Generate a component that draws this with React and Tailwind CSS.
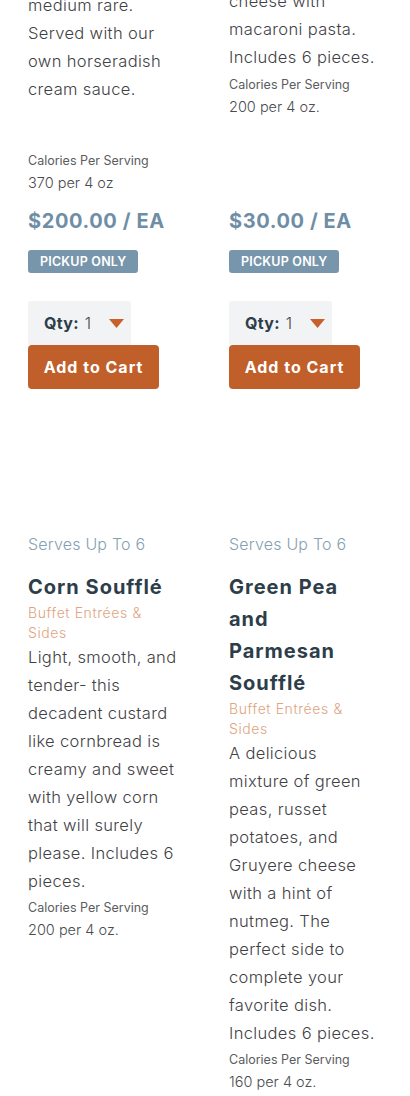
const font = { fontFamily: 'Inter, "Open Sans", sans-serif' };

const topRow = [
    {
        lines: ['medium rare.', 'Served with our', 'own horseradish', 'cream sauce.'],
        offset: 'mt-[-9px]',
        gap: 'mt-[48px]',
        calories: '370 per 4 oz',
        price: '$200.00 / EA',
    },
    {
        lines: ['cheese with', 'macaroni pasta.', 'Includes 6 pieces.'],
        offset: 'mt-[-13px]',
        gap: 'mt-[4px]',
        calories: '200 per 4 oz.',
        price: '$30.00 / EA',
    },
];

const bottomRow = [
    {
        title: ['Corn Soufflé'],
        lines: [
            'Light, smooth, and',
            'tender- this',
            'decadent custard',
            'like cornbread is',
            'creamy and sweet',
            'with yellow corn',
            'that will surely',
            'please. Includes 6',
            'pieces.',
        ],
        calories: '200 per 4 oz.',
    },
    {
        title: ['Green Pea', 'and', 'Parmesan', 'Soufflé'],
        lines: [
            'A delicious',
            'mixture of green',
            'peas, russet',
            'potatoes, and',
            'Gruyere cheese',
            'with a hint of',
            'nutmeg. The',
            'perfect side to',
            'complete your',
            'favorite dish.',
            'Includes 6 pieces.',
        ],
        calories: '160 per 4 oz.',
    },
];

const Description = ({ lines }) => (
    <p className="text-[16.5px] leading-[28px] font-light tracking-[0.35px] text-[#3f4245]">
        {lines.map((l, i) => (
            <span key={i} className="block whitespace-nowrap">{l}</span>
        ))}
    </p>
);

const Calories = ({ value, gap }) => (
    <div className={gap}>
        <p className="text-[12.5px] leading-[20px] text-[#5a5d60]">Calories Per Serving</p>
        <p className="text-[14.5px] leading-[24px] font-light text-[#4a4d50]">{value}</p>
    </div>
);

const App = () => {
    return (
        <div className="bg-white min-h-[1096px] overflow-hidden" style={font}>
            <div className="grid grid-cols-2 gap-x-[48px] px-[28px]">
                {topRow.map((p, i) => (
                    <div key={i} className={`flex flex-col ${p.offset}`}>
                        <Description lines={p.lines} />
                        <Calories value={p.calories} gap={p.gap} />

                        <div className="mt-auto pt-[12px]">
                            <p className="text-[20px] leading-[28px] font-bold tracking-[0.6px] text-[#6f8ea6]">{p.price}</p>
                            <span className="inline-block mt-[15px] h-[23px] px-[12px] leading-[23px] rounded-[3px] bg-[#7896ab] text-white text-[12.5px] font-semibold tracking-[0.2px]">
                                PICKUP ONLY
                            </span>

                            <div className="mt-[28px]">
                                <div className="w-[103px] h-[44px] rounded-t-[3px] bg-[#f2f3f5] flex items-center pl-[16px] pr-[7px]">
                                    <span className="text-[16px] font-bold tracking-[0.3px] text-[#2d3d49]">Qty:</span>
                                    <span className="ml-[6px] text-[16px] font-light text-[#444]">1</span>
                                    <svg className="ml-auto" width="15" height="9" viewBox="0 0 15 9">
                                        <path d="M0 0h15L7.5 9z" fill="#c8602b" />
                                    </svg>
                                </div>
                                <button className="w-[131px] h-[44px] rounded-[4px] bg-[#c15f2a] text-white text-[16px] font-bold tracking-[1px]">
                                    Add to Cart
                                </button>
                            </div>
                        </div>
                    </div>
                ))}
            </div>

            <div className="grid grid-cols-2 gap-x-[48px] px-[28px] mt-[143px] pb-[20px]">
                {bottomRow.map((p, i) => (
                    <div key={i} className="flex flex-col">
                        <p className="text-[16px] leading-[24px] font-light tracking-[0.2px] text-[#859fb3]">Serves Up To 6</p>
                        <h3 className="mt-[15px] text-[20px] leading-[32px] font-bold tracking-[1px] text-[#2d3e4a]">
                            {p.title.map((t, j) => (
                                <span key={j} className="block whitespace-nowrap">{t}</span>
                            ))}
                        </h3>
                        <p className="text-[14px] leading-[20px] font-light tracking-[0.6px] text-[#e0a47f]">
                            Buffet Entrées &amp;<br />Sides
                        </p>
                        <Description lines={p.lines} />
                        <Calories value={p.calories} gap="mt-[3px]" />
                    </div>
                ))}
            </div>
        </div>
    );
};

export default App;
